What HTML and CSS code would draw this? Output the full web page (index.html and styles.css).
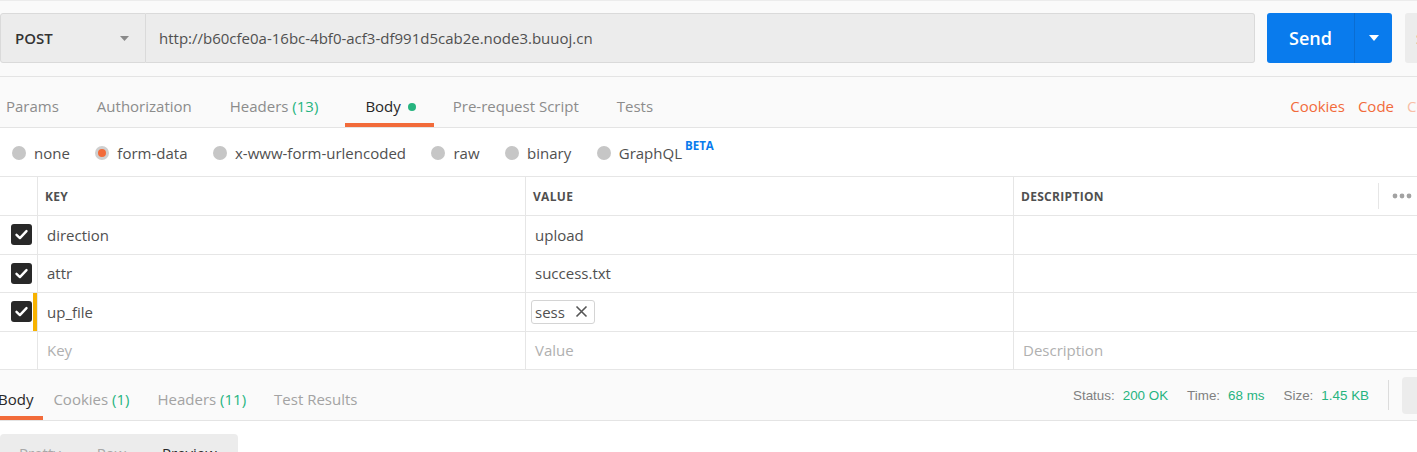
FILE: index.html
```html
<!DOCTYPE html>
<html>
<head>
<meta charset="utf-8">
<title>Postman</title>
<link rel="stylesheet" href="styles.css">
</head>
<body>
<div class="urlbar">
  <div class="method">
    <span>POST</span>
    <svg class="caret" width="9" height="5" viewBox="0 0 9 5"><path d="M0 0h9L4.5 5z" fill="#8a8a8a"/></svg>
  </div>
  <div class="url">http://b60cfe0a-16bc-4bf0-acf3-df991d5cab2e.node3.buuoj.cn</div>
  <div class="send">
    <span class="send-label">Send</span>
    <span class="send-arrow"><svg width="10" height="6" viewBox="0 0 10 6"><path d="M0 0h10L5 6z" fill="#fff"/></svg></span>
  </div>
  <div class="save">Save</div>
</div>

<div class="tabs">
  <div class="tab first">Params</div>
  <div class="tab">Authorization</div>
  <div class="tab">Headers <span class="count">(13)</span></div>
  <div class="tab active body-tab">Body<span class="dot"></span></div>
  <div class="tab">Pre-request Script</div>
  <div class="tab">Tests</div>
  <div class="links">
    <span>Cookies</span>
    <span>Code</span>
    <span class="clip">Comments (0)</span>
  </div>
</div>

<div class="radios">
  <label class="radio"><i></i>none</label>
  <label class="radio"><i class="on"></i>form-data</label>
  <label class="radio"><i></i>x-www-form-urlencoded</label>
  <label class="radio"><i></i>raw</label>
  <label class="radio"><i></i>binary</label>
  <label class="radio"><i></i><span class="rtext">GraphQL<sup class="beta">BETA</sup></span></label>
</div>

<div class="kv">
  <div class="row head">
    <div class="cell check"></div>
    <div class="cell">KEY</div>
    <div class="cell">VALUE</div>
    <div class="cell last desc-head">
      <span>DESCRIPTION</span>
      <span class="more">
        <span class="vsep"></span>
        <svg width="20" height="6" viewBox="0 0 20 6"><circle cx="3" cy="3" r="2.4" fill="#a2a2a2"/><circle cx="10" cy="3" r="2.4" fill="#a2a2a2"/><circle cx="17" cy="3" r="2.4" fill="#a2a2a2"/></svg>
      </span>
    </div>
  </div>
  <div class="row">
    <div class="cell check"><svg width="21" height="21" viewBox="0 0 21 21"><rect width="21" height="21" rx="3" fill="#282828"/><path d="M5.5 10.8l3.4 3.3 6.6-7" fill="none" stroke="#fff" stroke-width="2.4" stroke-linecap="round" stroke-linejoin="round"/></svg></div>
    <div class="cell">direction</div>
    <div class="cell">upload</div>
    <div class="cell last"></div>
  </div>
  <div class="row">
    <div class="cell check"><svg width="21" height="21" viewBox="0 0 21 21"><rect width="21" height="21" rx="3" fill="#282828"/><path d="M5.5 10.8l3.4 3.3 6.6-7" fill="none" stroke="#fff" stroke-width="2.4" stroke-linecap="round" stroke-linejoin="round"/></svg></div>
    <div class="cell">attr</div>
    <div class="cell">success.txt</div>
    <div class="cell last"></div>
  </div>
  <div class="row">
    <div class="cell check marked"><svg width="21" height="21" viewBox="0 0 21 21"><rect width="21" height="21" rx="3" fill="#282828"/><path d="M5.5 10.8l3.4 3.3 6.6-7" fill="none" stroke="#fff" stroke-width="2.4" stroke-linecap="round" stroke-linejoin="round"/></svg></div>
    <div class="cell">up_file</div>
    <div class="cell chip-cell"><span class="chip">sess<svg width="13" height="13" viewBox="0 0 13 13"><path d="M1.5 1.5l10 10M11.5 1.5l-10 10" stroke="#555" stroke-width="1.6" fill="none"/></svg></span></div>
    <div class="cell last"></div>
  </div>
  <div class="row">
    <div class="cell check"></div>
    <div class="cell ph">Key</div>
    <div class="cell ph">Value</div>
    <div class="cell last ph">Description</div>
  </div>
</div>

<div class="tabs res">
  <div class="tab active res-body">Body</div>
  <div class="tab">Cookies <span class="count">(1)</span></div>
  <div class="tab">Headers <span class="count">(11)</span></div>
  <div class="tab">Test Results</div>
  <div class="status">
    <span class="stat"><span class="lbl">Status:</span><span class="val">200 OK</span></span>
    <span class="stat"><span class="lbl">Time:</span><span class="val">68 ms</span></span>
    <span class="stat"><span class="lbl">Size:</span><span class="val">1.45 KB</span></span>
    <span class="vdiv"></span>
    <span class="savebox"></span>
  </div>
</div>

<div class="viewer">
  <div class="seg">
    <span class="seg-item">Pretty</span>
    <span class="seg-item">Raw</span>
    <span class="seg-item sel">Preview</span>
  </div>
</div>
</body>
</html>
```

FILE: styles.css
```css
* { box-sizing: border-box; }
html, body { margin: 0; padding: 0; overflow: hidden; }
body {
  width: 1417px;
  height: 452px;
  background: #fff;
  font-family: "Open Sans", "Liberation Sans", sans-serif;
  font-size: 15px;
  color: #505050;
}

/* URL bar */
.urlbar {
  display: flex;
  height: 77px;
  padding: 12px 0 13px;
  background: #fafafa;
  border-top: 1px solid #ececec;
  border-bottom: 1px solid #e4e4e4;
}
.urlbar > * { flex-shrink: 0; height: 50px; }
.method {
  width: 146px;
  display: flex;
  align-items: center;
  padding: 0 16px 0 14px;
  background: #ececec;
  border: 1px solid #dadada;
  border-radius: 3px 0 0 3px;
  font-weight: 600;
  color: #333;
}
.method .caret { margin-left: auto; }
.url {
  width: 1109px;
  display: flex;
  align-items: center;
  padding-left: 13px;
  background: #ececec;
  border: 1px solid #dadada;
  border-left: none;
  border-radius: 0 3px 3px 0;
  white-space: nowrap;
  overflow: hidden;
}
.send {
  width: 125px;
  margin-left: 12px;
  display: flex;
  background: #097bed;
  border-radius: 3px;
  color: #fff;
}
.send-label {
  width: 87px;
  display: flex;
  align-items: center;
  justify-content: center;
  font-size: 18px;
  font-weight: 600;
}
.send-arrow {
  flex: 1;
  display: flex;
  align-items: center;
  justify-content: center;
  border-left: 1px solid #0a6dd2;
}
.save {
  width: 100px;
  margin-left: 13px;
  background: #ececec;
  border-radius: 3px;
  display: flex;
  align-items: center;
  padding-left: 11px;
  color: #505050;
}

/* Tabs */
.tabs {
  display: flex;
  height: 51px;
  background: #fafafa;
  border-bottom: 1px solid #e4e4e4;
}
.tab {
  flex-shrink: 0;
  height: 50px;
  padding: 18px 19px 0;
  line-height: 22px;
  border-bottom: 4px solid transparent;
  color: #8c8c8c;
  white-space: nowrap;
}
.tab.first { margin-left: -13px; }
.tab.active { color: #282828; border-bottom-color: #f26b3a; }
.body-tab {
  margin-left: 8px;
  padding-left: 20px;
  padding-right: 18px;
  display: flex;
  align-items: flex-start;
}
.count { color: #26b47f; }
.dot {
  width: 8px;
  height: 8px;
  border-radius: 50%;
  background: #26b47f;
  margin: 8px 0 0 7px;
}
.links {
  margin-left: auto;
  display: flex;
  gap: 13px;
  padding-top: 18px;
  line-height: 22px;
  color: #f26b3a;
  white-space: nowrap;
}
.links .clip { width: 10px; overflow: hidden; color: #f8bea6; }

/* Radios */
.radios {
  display: flex;
  align-items: center;
  gap: 25.5px;
  height: 48px;
  padding-left: 12px;
  padding-top: 1px;
  background: #fff;
}
.radio {
  display: flex;
  align-items: center;
  line-height: 20px;
  white-space: nowrap;
}
.radio i {
  width: 14px;
  height: 14px;
  border-radius: 50%;
  background: #c6c6c6;
  margin-right: 8px;
}
.radio i.on {
  background: #f26b3a;
  border: 3px solid #cfcfcf;
}
.rtext { display: inline; }
.beta {
  font-size: 11.5px;
  font-weight: 700;
  color: #097bed;
  vertical-align: 9px;
  margin-left: 3px;
  line-height: 0;
}

/* Key-value table */
.kv {
  border-top: 1px solid #e6e6e6;
  background: #fff;
}
.row {
  display: grid;
  grid-template-columns: 38px 488px 488px 1fr;
  height: 38.5px;
  border-bottom: 1px solid #e6e6e6;
}
.row.head { height: 39px; }
.cell {
  display: flex;
  align-items: center;
  padding-left: 9px;
  border-right: 1px solid #e6e6e6;
  white-space: nowrap;
  overflow: hidden;
}
.cell.last { border-right: none; }
.cell.check { padding-left: 11px; }
.cell.check.marked { box-shadow: inset -4px 0 0 #f7b200; }
.head .cell {
  padding-left: 7px;
  font-size: 12px;
  font-weight: 700;
  letter-spacing: 0.3px;
  color: #505050;
}
.desc-head { justify-content: space-between; }
.head .more {
  display: flex;
  align-items: center;
  padding-right: 5px;
}
.vsep {
  width: 1px;
  height: 26px;
  background: #e6e6e6;
  margin-right: 13px;
}
.ph { color: #b0b0b0; }
.chip-cell { padding-left: 5px; }
.chip {
  display: flex;
  align-items: center;
  gap: 10px;
  height: 24px;
  padding: 0 6px 0 3px;
  border: 1px solid #d4d4d4;
  border-radius: 3px;
}

/* Response tabs */
.tabs.res .tab { padding-left: 14px; padding-right: 14px; color: #a3a3a3; }
.tabs.res .tab.active { color: #282828; }
.tabs.res .res-body { margin-left: -16px; padding-right: 10px; margin-right: -4px; }
.status {
  margin-left: auto;
  display: flex;
  align-items: center;
  height: 50px;
  font-family: "Liberation Sans", Arial, sans-serif;
  font-size: 13.4px;
  white-space: nowrap;
}
.stat { margin-left: 19px; }
.stat:first-child { margin-left: 0; }
.lbl { color: #808080; margin-right: 8px; }
.val { color: #26b47f; }
.vdiv {
  width: 1px;
  height: 30px;
  background: #dcdcdc;
  margin: 0 13px 0 19px;
}
.savebox {
  width: 15px;
  height: 37px;
  background: #ececec;
  border-radius: 4px 0 0 4px;
}

/* Viewer */
.viewer { padding-top: 13px; background: #fff; }
.seg {
  display: inline-flex;
  width: 238px;
  height: 36px;
  padding: 9px 1px 0;
  background: #ececec;
  border-radius: 4px;
}
.seg-item {
  padding: 0 18px;
  line-height: 20px;
  color: #a8a8a8;
}
.seg-item.sel { color: #282828; }
```
